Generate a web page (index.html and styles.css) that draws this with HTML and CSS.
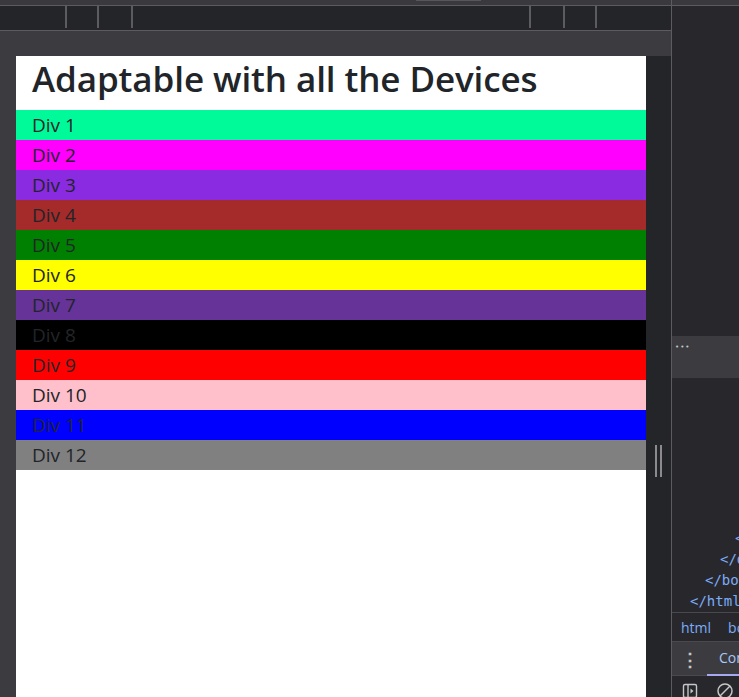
FILE: index.html
```html
<!DOCTYPE html>
<html>
<head>
<meta charset="utf-8">
<link rel="stylesheet" href="styles.css">
</head>
<body>
<div class="app">
  <div class="main">
    <div class="topstrip"><span class="thumb"></span></div>
    <div class="toolbar">
      <span class="seg s1"></span>
      <span class="seg s2"></span>
      <span class="seg s3"></span>
      <span class="seg s4"></span>
      <span class="seg s5"></span>
      <span class="seg s6"></span>
      <span class="seg s7"></span>
    </div>
    <div class="ruler"></div>
    <div class="stage">
      <div class="gutter"></div>
      <div class="canvas">
        <h1 class="title">Adaptable with all the Devices</h1>
        <div class="row c1">Div 1</div>
        <div class="row c2">Div 2</div>
        <div class="row c3">Div 3</div>
        <div class="row c4">Div 4</div>
        <div class="row c5">Div 5</div>
        <div class="row c6">Div 6</div>
        <div class="row c7">Div 7</div>
        <div class="row c8">Div 8</div>
        <div class="row c9">Div 9</div>
        <div class="row c10">Div 10</div>
        <div class="row c11">Div 11</div>
        <div class="row c12">Div 12</div>
      </div>
      <div class="sidestrip">
        <div class="handle"><span></span><span></span></div>
      </div>
    </div>
  </div>
  <div class="divider"></div>
  <div class="panel">
    <div class="ptop"></div>
    <div class="pdark1"></div>
    <div class="pband"><span class="dots">&bull;&bull;&bull;</span></div>
    <div class="code">
      <div class="ln l4">&lt;/div&gt;</div>
      <div class="ln l3">&lt;/div&gt;</div>
      <div class="ln l2">&lt;/body&gt;</div>
      <div class="ln l1">&lt;/html&gt;</div>
    </div>
    <div class="crumbs"><span>html</span><span>body</span></div>
    <div class="tabs"><span class="kebab">&#8942;</span><span class="tab">Console</span></div>
    <div class="ptools">
      <svg width="18" height="18" viewBox="0 0 18 18"><rect x="2.5" y="3.5" width="13" height="13" rx="1.5" fill="none" stroke="#c4c7c5" stroke-width="1.4"/><line x1="7" y1="3.5" x2="7" y2="16.5" stroke="#c4c7c5" stroke-width="1.4"/><path d="M9.5 7.5 L12.5 10 L9.5 12.5 Z" fill="#c4c7c5"/></svg>
      <svg width="18" height="18" viewBox="0 0 18 18"><circle cx="9" cy="10" r="7" fill="none" stroke="#c4c7c5" stroke-width="1.5"/><line x1="4" y1="15" x2="14" y2="5" stroke="#c4c7c5" stroke-width="1.5"/></svg>
    </div>
  </div>
</div>
</body>
</html>
```

FILE: styles.css
```css
html, body {
  margin: 0;
  padding: 0;
  width: 739px;
  height: 697px;
  overflow: hidden;
  background: #3c3c40;
}

.app {
  display: flex;
  width: 739px;
  height: 697px;
}

.main {
  width: 671px;
  display: flex;
  flex-direction: column;
  flex: none;
}

.topstrip {
  height: 5px;
  background: #3a3a3e;
  border-bottom: 1px solid #5c5c60;
  position: relative;
}

.topstrip .thumb {
  position: absolute;
  left: 416px;
  top: 0;
  width: 65px;
  height: 1px;
  background: #57575b;
}

.toolbar {
  height: 24px;
  background: #242529;
  border-bottom: 1px solid #5c5c60;
  display: flex;
  align-items: flex-start;
}

.seg {
  height: 22px;
  border-right: 2px solid #5c5c60;
  flex: none;
}
.s1 { width: 65px; }
.s2 { width: 30px; }
.s3 { width: 32px; }
.s4 { width: 396px; }
.s5 { width: 32px; }
.s6 { width: 30px; }
.s7 { width: 0; border: none; }

.ruler {
  height: 25px;
  background: #3c3b40;
}

.stage {
  flex: 1;
  display: flex;
  min-height: 0;
}

.gutter {
  width: 16px;
  background: #3c3b40;
  flex: none;
}

.canvas {
  width: 630px;
  flex: none;
  background: #ffffff;
  font-family: "Open Sans", "Noto Sans", sans-serif;
  color: #212529;
}

.title {
  margin: 0 0 8px;
  padding: 0 16px;
  font-size: 35px;
  font-weight: 600;
  line-height: 46px;
  letter-spacing: -0.1px;
  color: #212529;
}

.row {
  height: 30px;
  line-height: 30px;
  padding-left: 16px;
  font-size: 19px;
}

.c1 { background: #00fa9a; }
.c2 { background: #ff00ff; }
.c3 { background: #8a2be2; }
.c4 { background: #a52a2a; }
.c5 { background: #008000; }
.c6 { background: #ffff00; }
.c7 { background: #663399; }
.c8 { background: #000000; }
.c9 { background: #ff0000; }
.c10 { background: #ffc0cb; }
.c11 { background: #0000ff; }
.c12 { background: #808080; }

.sidestrip {
  width: 25px;
  flex: none;
  background: #242529;
}

.handle {
  display: flex;
  gap: 3px;
  margin: 389px 0 0 9px;
}

.handle span {
  width: 2px;
  height: 32px;
  background: #8b8b8f;
}

.divider {
  width: 1px;
  flex: none;
  background: #5c5c60;
}

.panel {
  flex: 1;
  min-width: 0;
  overflow: hidden;
  background: #28282c;
  display: flex;
  flex-direction: column;
}

.ptop {
  height: 5px;
  background: #3a3a3e;
  border-bottom: 1px solid #5c5c60;
  flex: none;
}

.pdark1 {
  height: 330px;
  flex: none;
}

.pband {
  height: 42px;
  background: #3c3c40;
  flex: none;
  color: #c4c7c5;
  font-family: "DejaVu Sans", sans-serif;
  font-size: 7px;
  line-height: 1;
  padding: 8px 0 0 3px;
  box-sizing: border-box;
  letter-spacing: 1px;
}

.code {
  height: 234px;
  flex: none;
  display: flex;
  flex-direction: column;
  justify-content: flex-end;
  font-family: "DejaVu Sans Mono", monospace;
  font-size: 14px;
  line-height: 21px;
  color: #7cacf8;
  white-space: nowrap;
}

.l4 { padding-left: 63px; }
.l3 { padding-left: 48px; }
.l2 { padding-left: 33px; }
.l1 { padding-left: 18px; }

.crumbs {
  height: 28px;
  flex: none;
  border-top: 1px solid #4a4a4e;
  border-bottom: 1px solid #4a4a4e;
  display: flex;
  align-items: center;
  gap: 17px;
  padding-left: 9px;
  font-family: "Open Sans", sans-serif;
  font-size: 14px;
  color: #7cacf8;
  white-space: nowrap;
}

.crumbs span { flex: none; }

.tabs {
  height: 34px;
  flex: none;
  background: #3c3c40;
  border-bottom: 1px solid #4a4a4e;
  box-sizing: border-box;
  display: flex;
  align-items: center;
  font-family: "Open Sans", sans-serif;
  font-size: 14px;
  white-space: nowrap;
}

.kebab {
  flex: none;
  width: 35px;
  text-align: center;
  color: #c4c7c5;
  font-size: 18px;
  font-weight: bold;
}

.tab {
  flex: none;
  color: #a8c7fa;
  height: 34px;
  line-height: 32px;
  box-sizing: border-box;
  padding-left: 12px;
  border-bottom: 2px solid #a8a8f0;
}

.ptools {
  flex: 1;
  display: flex;
  gap: 17px;
  align-items: flex-start;
  padding: 5px 0 0 9px;
}

.ptools svg { flex: none; }
```
